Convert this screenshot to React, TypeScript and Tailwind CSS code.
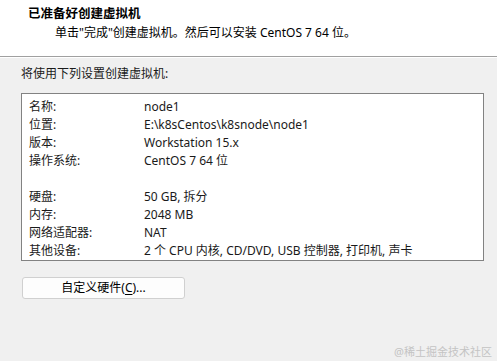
import React from 'react';

const rows: [string, string][] = [
  ['名称:', 'node1'],
  ['位置:', 'E:\\k8sCentos\\k8snode\\node1'],
  ['版本:', 'Workstation 15.x'],
  ['操作系统:', 'CentOS 7 64 位'],
];

const hwRows: [string, string][] = [
  ['硬盘:', '50 GB, 拆分'],
  ['内存:', '2048 MB'],
  ['网络适配器:', 'NAT'],
  ['其他设备:', '2 个 CPU 内核, CD/DVD, USB 控制器, 打印机, 声卡'],
];

const Row: React.FC<{ label: string; value: string }> = ({ label, value }) => (
  <div className="flex h-[18px] items-center">
    <span className="w-[115px] shrink-0">{label}</span>
    <span className="whitespace-nowrap">{value}</span>
  </div>
);

export default function App() {
  return (
    <div
      className="relative h-[361px] w-[497px] overflow-hidden bg-[#f0f0f0] text-[12px] leading-none text-[#1a1a1a]"
      style={{ fontFamily: '"Noto Sans", "Noto Sans CJK SC", sans-serif' }}
    >
      {/* Header */}
      <div className="flex h-[56px] flex-col bg-white pl-[28px] pt-[8px]">
        <div className="text-[12.5px] font-bold text-black">已准备好创建虚拟机</div>
        <div className="mt-[6px] pl-[27px] text-black">单击"完成"创建虚拟机。然后可以安装 CentOS 7 64 位。</div>
      </div>
      <div className="h-px bg-[#a0a0a0]" />
      <div className="h-px bg-white" />

      {/* Body */}
      <div className="px-[21px] pt-[10px]">
        <div className="h-[14px]">将使用下列设置创建虚拟机:</div>

        <div className="mt-[11px] h-[168px] w-[463px] border border-[#828282] bg-white px-[7px] pt-[4px]">
          {rows.map(([l, v]) => (
            <Row key={l} label={l} value={v} />
          ))}
          <div className="h-[18px]" />
          {hwRows.map(([l, v]) => (
            <Row key={l} label={l} value={v} />
          ))}
        </div>

        <button className="mt-[16px] ml-px flex h-[22px] w-[163px] items-center justify-center rounded-[3px] border border-[#d0d0d0] bg-[#fdfdfd] text-[12px] text-black">
          自定义硬件(<span className="underline underline-offset-2">C</span>)...
        </button>
      </div>

      <div className="absolute bottom-[4px] right-[5px] text-[11px] text-[#c4c4c4]">@稀土掘金技术社区</div>
    </div>
  );
}
